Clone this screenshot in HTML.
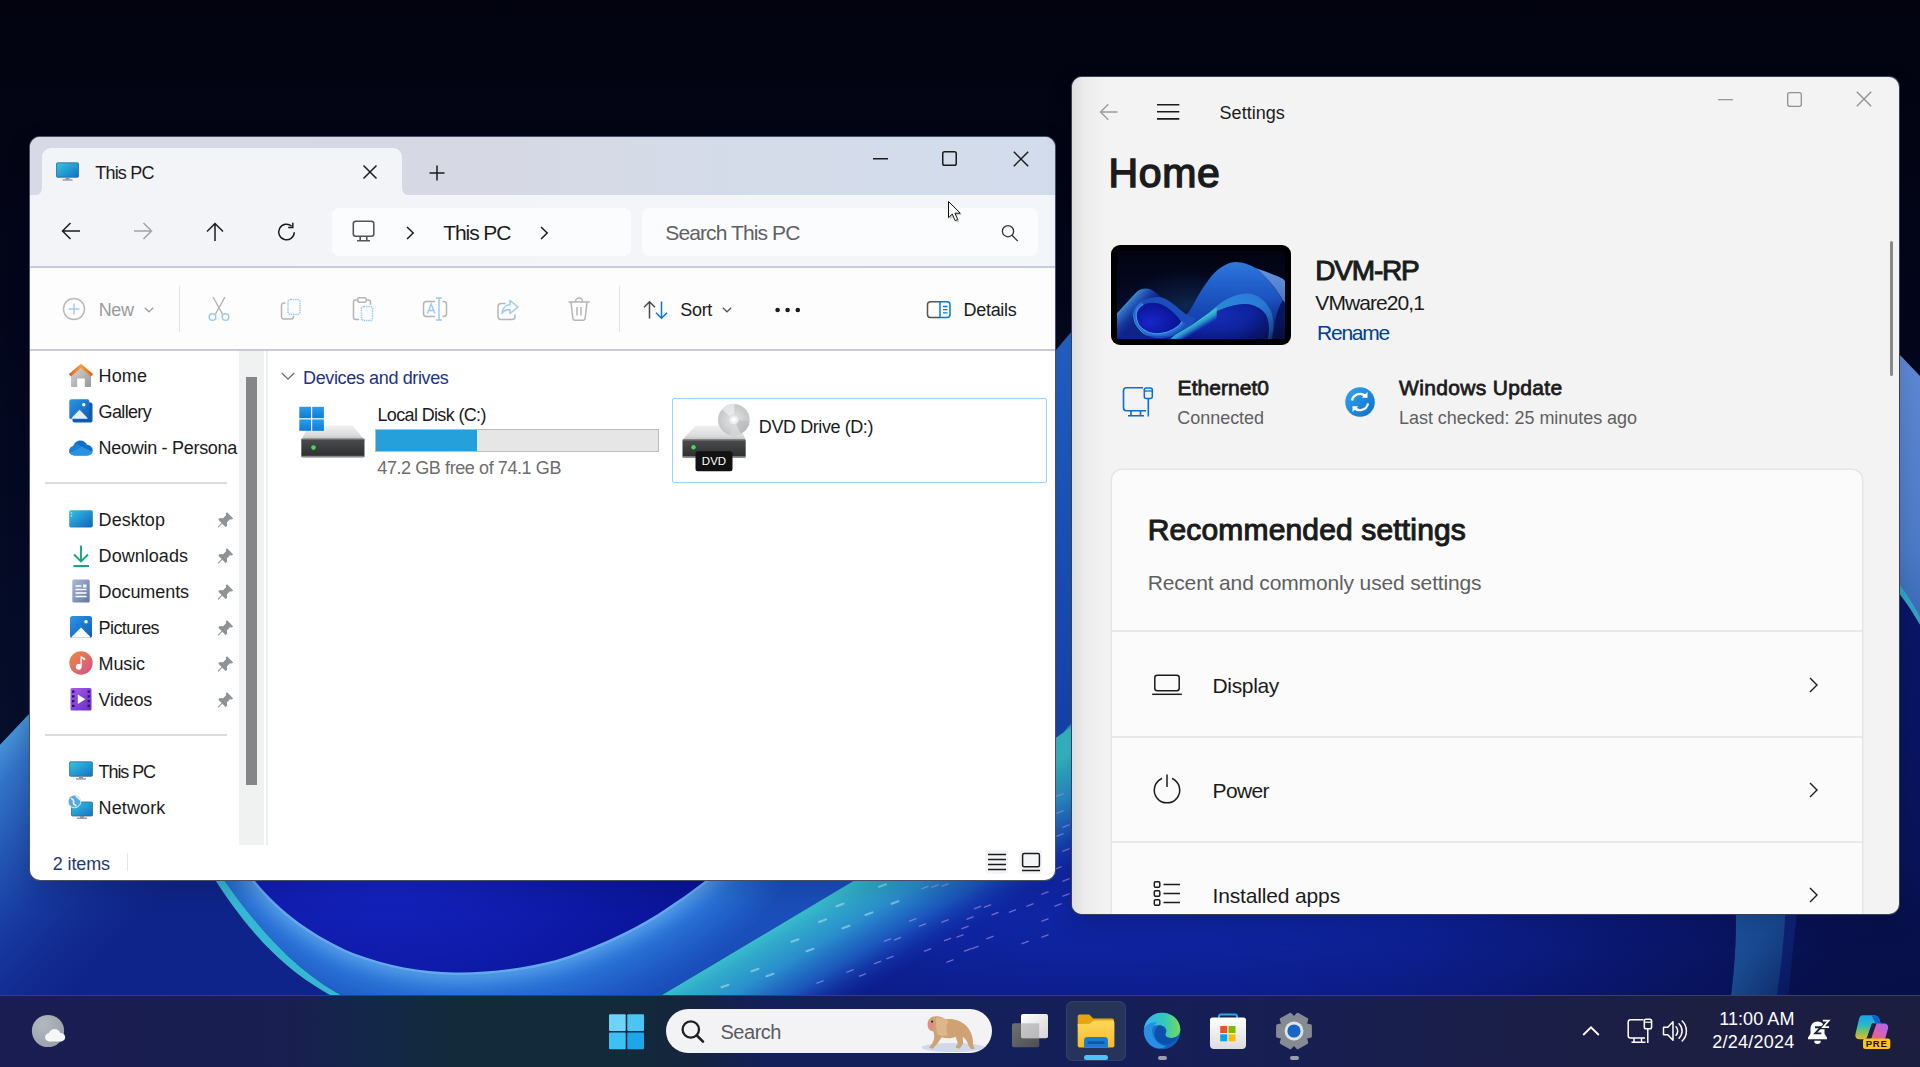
<!DOCTYPE html>
<html lang="en"><head><meta charset="utf-8"><title>Desktop</title>
<style>
html,body{margin:0;padding:0;}
body{width:1920px;height:1067px;overflow:hidden;background:#03051a;position:relative;font-family:"Liberation Sans",sans-serif;}
.t{position:absolute;white-space:nowrap;line-height:1;z-index:50;}
.a{position:absolute;}
svg{position:absolute;overflow:visible;}
</style></head><body>
<svg width="0" height="0" style="left:0;top:0"><defs>
<linearGradient id="wbg" x1="0" y1="0" x2="0" y2="1"><stop offset="0" stop-color="#02030f"/><stop offset=".4" stop-color="#040820"/><stop offset=".75" stop-color="#06102e"/><stop offset="1" stop-color="#081648"/></linearGradient>
<radialGradient id="whalo" cx=".42" cy=".62" r=".38"><stop offset="0" stop-color="#12305c" stop-opacity=".75"/><stop offset=".7" stop-color="#0a1c40" stop-opacity=".4"/><stop offset="1" stop-color="#0a1c40" stop-opacity="0"/></radialGradient>
<linearGradient id="wlp" gradientUnits="userSpaceOnUse" x1="15" y1="730" x2="176" y2="880"><stop offset="0" stop-color="#4690d6"/><stop offset=".12" stop-color="#3272c6"/><stop offset=".35" stop-color="#2356b4"/><stop offset=".6" stop-color="#1739a0"/><stop offset=".8" stop-color="#122c92"/><stop offset="1" stop-color="#0f248a"/></linearGradient>
<linearGradient id="wbp" x1="0" y1="0" x2="0" y2="1"><stop offset="0" stop-color="#2f78dc"/><stop offset=".25" stop-color="#2262cc"/><stop offset=".6" stop-color="#1848b6"/><stop offset="1" stop-color="#1030a4"/></linearGradient>
<linearGradient id="wperi" x1="0" y1="0" x2="0" y2="1"><stop offset="0" stop-color="#6a92dc"/><stop offset=".7" stop-color="#4f7ccc"/><stop offset="1" stop-color="#3a70c0"/></linearGradient>
<radialGradient id="wlbowl" cx=".32" cy=".62" r=".62"><stop offset="0" stop-color="#1826c8"/><stop offset=".55" stop-color="#0f1cac"/><stop offset="1" stop-color="#0a1498"/></radialGradient>
<linearGradient id="wring" x1="0" y1="0" x2="1" y2="1"><stop offset="0" stop-color="#2c74d8"/><stop offset=".5" stop-color="#2a78dc"/><stop offset="1" stop-color="#1d58c6"/></linearGradient>
<linearGradient id="wridge" x1="0" y1="1" x2="1" y2="0"><stop offset="0" stop-color="#2a7cd4"/><stop offset=".18" stop-color="#30b4d8"/><stop offset=".4" stop-color="#2a8ad0"/><stop offset=".7" stop-color="#2a80dc"/><stop offset="1" stop-color="#2a70c8"/></linearGradient>
<radialGradient id="wrbowl" cx=".45" cy=".3" r=".8"><stop offset="0" stop-color="#152db6"/><stop offset=".5" stop-color="#0e239e"/><stop offset="1" stop-color="#081260"/></radialGradient>
<linearGradient id="wshade" x1="0" y1="0" x2="1" y2="0"><stop offset="0" stop-color="#050c40" stop-opacity="0"/><stop offset="1" stop-color="#050c40" stop-opacity=".85"/></linearGradient>
<linearGradient id="wridge2" gradientUnits="userSpaceOnUse" x1="758" y1="938" x2="819" y2="1041"><stop offset="0" stop-color="#38bccc"/><stop offset=".1" stop-color="#30aaca"/><stop offset=".3" stop-color="#2a8ecc"/><stop offset=".55" stop-color="#1c5cc0" stop-opacity=".9"/><stop offset=".85" stop-color="#1030ac" stop-opacity="0"/><stop offset="1" stop-color="#0e2aa8" stop-opacity="0"/></linearGradient>
<radialGradient id="wshade2" gradientUnits="userSpaceOnUse" cx="1930" cy="1090" r="540"><stop offset="0" stop-color="#060c3c" stop-opacity=".92"/><stop offset=".3" stop-color="#070e44" stop-opacity=".8"/><stop offset=".42" stop-color="#08104a" stop-opacity=".5"/><stop offset=".7" stop-color="#08104a" stop-opacity=".2"/><stop offset="1" stop-color="#08104a" stop-opacity="0"/></radialGradient>
<symbol id="bloom" viewBox="0 0 1920 1067" preserveAspectRatio="none">
<rect width="1920" height="1067" fill="url(#wbg)"/>
<rect width="1920" height="1067" fill="url(#whalo)"/>
<!-- periwinkle petal -->
<path d="M1590 232 C1700 270 1820 310 1899 354 L1920 376 L1925 660 C1880 560 1800 420 1590 232Z" fill="url(#wperi)"/>
<!-- big petal -->
<path d="M700 1080 L758 806 C800 760 840 710 875 640 C920 550 985 440 1056 350 C1135 255 1230 170 1349 161 C1440 160 1540 200 1605 241 C1760 380 1860 520 1925 660 L1925 1080Z" fill="url(#wbp)"/>
<!-- dark right below periwinkle -->
<path d="M1899 590 L1925 632 L1925 1080 L1780 1080 C1800 900 1800 740 1899 590Z" fill="#0a1668"/>
<path d="M1893 586 C1905 600 1915 615 1925 634 L1925 626 C1916 608 1908 596 1899 584Z" fill="#35b0cc"/>
<!-- left petal -->
<path d="M-5 750 L30 713 C100 640 170 560 231 498 C270 462 330 452 380 470 C440 495 500 560 560 625 C640 715 700 770 770 815 L820 1080 L-5 1080Z" fill="url(#wlp)"/>
<!-- left ring + bowl -->
<path d="M185 700 C150 780 230 930 350 1000 C430 1040 560 1040 662 995 L855 880 L900 800 C840 790 790 760 740 720 C660 650 560 560 470 560 C340 560 220 620 185 700Z" fill="#1b4eba"/>
<clipPath id="ringclip"><path d="M200 700 C188 760 197 830 217 870 C258 930 299 975 350 1000 L420 1080 L662 1080 L662 995 L855 880 L900 800 C840 790 790 760 740 720 C660 650 560 560 470 560 C340 560 230 620 200 700Z"/></clipPath>
<filter id="wblur" x="-10%" y="-10%" width="120%" height="120%"><feGaussianBlur stdDeviation="7"/></filter>
<g clip-path="url(#ringclip)"><g fill="none" filter="url(#wblur)">
<path d="M300 650 C250 680 225 720 225 760 C225 805 238 850 255 881 C280 912 315 937 353 953 C388 966 420 972 455 972.500 C490 973 525 968 556 960 C592 949 627 933 658 914 C675 903 692 891 705 881 C718 870 728 852 735 840" stroke-width="116" stroke="#1f58c2"/>

<path d="M300 650 C250 680 225 720 225 760 C225 805 238 850 255 881 C280 912 315 937 353 953 C388 966 420 972 455 972.500 C490 973 525 968 556 960 C592 949 627 933 658 914 C675 903 692 891 705 881 C718 870 728 852 735 840" stroke-width="88" stroke="#2362ca"/>
<path d="M300 650 C250 680 225 720 225 760 C225 805 238 850 255 881 C280 912 315 937 353 953 C388 966 420 972 455 972.500 C490 973 525 968 556 960 C592 949 627 933 658 914 C675 903 692 891 705 881 C718 870 728 852 735 840" stroke-width="62" stroke="#286cd2"/>
<path d="M300 650 C250 680 225 720 225 760 C225 805 238 850 255 881 C280 912 315 937 353 953 C388 966 420 972 455 972.500 C490 973 525 968 556 960 C592 949 627 933 658 914 C675 903 692 891 705 881 C718 870 728 852 735 840" stroke-width="40" stroke="#2e78da"/>
<path d="M300 650 C250 680 225 720 225 760 C225 805 238 850 255 881 C280 912 315 937 353 953 C388 966 420 972 455 972.500 C490 973 525 968 556 960 C592 949 627 933 658 914 C675 903 692 891 705 881 C718 870 728 852 735 840" stroke-width="22" stroke="#3a88e2"/>
<path d="M300 650 C250 680 225 720 225 760 C225 805 238 850 255 881 C280 912 315 937 353 953 C388 966 420 972 455 972.500 C490 973 525 968 556 960 C592 949 627 933 658 914 C675 903 692 891 705 881 C718 870 728 852 735 840" stroke-width="9" stroke="#5ea6ea"/>
</g></g>
<path d="M209 870 C249 935 289 975 340 1000 L350 1000 C299 975 258 930 217 870 C197 830 188 760 200 700 C183 760 189 830 209 870Z" fill="#35b8d4"/>
<path d="M225 760 C225 805 238 850 255 881 C280 912 315 937 353 953 C388 966 420 972 455 972.500 C490 973 525 968 556 960 C592 949 627 933 658 914 C675 903 692 891 705 881 C718 870 728 852 735 840" fill="none" stroke="#6aaeee" stroke-width="5" opacity=".8"/>
<path d="M225 760 C225 805 238 850 255 881 C280 912 315 937 353 953 C388 966 420 972 455 972.500 C490 973 525 968 556 960 C592 949 627 933 658 914 C675 903 692 891 705 881 C718 870 728 852 735 840 C700 790 640 720 560 670 C480 620 380 610 300 650 C250 680 225 720 225 760Z" fill="url(#wlbowl)"/>
<!-- ridge of big petal -->
<path d="M1064 732 C1100 690 1200 600 1330 550 C1380 530 1430 522 1477 520 C1600 515 1700 600 1760 720 C1800 810 1790 960 1760 1080 L1715 1080 C1745 960 1745 840 1700 760 C1650 680 1540 630 1440 640 C1330 650 1200 690 1120 735 C1095 752 1078 762 1064 768Z" fill="url(#wridge)"/>
<!-- right bowl -->
<path d="M560 1080 L662 995 L855 880 L1064 732 L1064 768 C1078 762 1095 752 1120 735 C1200 690 1330 650 1440 640 C1540 630 1650 680 1700 760 C1745 840 1745 960 1715 1080Z" fill="url(#wrbowl)"/>
<path d="M560 1080 L662 995 L855 880 L1064 732 L1140 680 L1140 800 L1000 1080Z" fill="url(#wridge2)"/>
<path d="M1300 500 L1925 500 L1925 1080 L1300 1080Z" fill="url(#wshade2)"/>
<path d="M1300 640 L1925 640 L1925 1080 L1300 1080Z" fill="url(#wshade)" opacity=".0"/>
</symbol>
</defs></svg>
<svg id="wall" width="1920" height="1067" viewBox="0 0 1920 1067" style="left:0;top:0">
<use href="#bloom" x="0" y="0" width="1920" height="1067"/>
<g stroke="#c4ecf4" stroke-width="2" stroke-linecap="round" opacity=".5"><path d="M721.5 987.3l7 -2.6M751.5 971.3l7 -2.6M791.5 941.8l7 -2.6M819.0 922.0l7 -2.6M842.5 928.3l7 -2.6M865.5 915.0l7 -2.6M879.0 886.8l7 -2.6M806.5 951.3l7 -2.6M891.5 903.8l7 -2.6M766.5 976.3l7 -2.6M836.5 906.3l7 -2.6"/></g>
<g stroke="#bca0f0" stroke-width="1.400" stroke-linecap="round" opacity=".55"><path d="M922.0 888.7l6 -2.4M932.0 887.2l6 -2.4M942.0 886.2l6 -2.4M909.5 921.2l6 -2.4M919.5 926.2l6 -2.4M884.5 941.2l6 -2.4M894.5 939.9l6 -2.4M924.5 951.2l6 -2.4M944.5 940.7l6 -2.4M957.0 937.2l6 -2.4M942.0 922.2l6 -2.4M967.0 919.2l6 -2.4M974.5 908.7l6 -2.4M984.5 907.2l6 -2.4M992.0 914.9l6 -2.4M1009.5 912.2l6 -2.4M962.0 928.7l6 -2.4M964.5 951.2l6 -2.4M972.0 948.7l6 -2.4M947.0 962.2l6 -2.4M887.0 958.7l6 -2.4M874.5 963.7l6 -2.4M847.0 972.2l6 -2.4M859.5 976.2l6 -2.4M817.0 983.2l6 -2.4M987.0 938.7l6 -2.4M1022.0 943.7l6 -2.4M1042.0 937.2l6 -2.4M1057.0 836.2l6 -2.4M1063.0 827.2l6 -2.4M1057.0 813.2l6 -2.4M1063.0 851.2l6 -2.4M1055.0 869.2l6 -2.4M1063.0 881.2l6 -2.4M1057.0 796.2l6 -2.4M1063.0 896.2l6 -2.4M1027.0 906.2l6 -2.4M1042.0 894.2l6 -2.4M1055.0 906.2l6 -2.4M1042.0 921.2l6 -2.4"/></g>
</svg>
<!-- ===== File Explorer window ===== -->
<div class="a" id="exwin" style="left:29px;top:136px;width:1027px;height:745px;border-radius:11px;background:#4a4f66;z-index:10;box-shadow:0 8px 24px rgba(0,0,10,.16)"></div>
<div class="a" id="exin" style="left:30px;top:137px;width:1025px;height:743px;border-radius:10px;overflow:hidden;background:#fff;z-index:11">
<div class="a" style="left:-30px;top:-137px;width:1920px;height:1067px">
  <!-- title bar -->
  <div class="a" style="left:30px;top:137px;width:1026px;height:59px;background:linear-gradient(90deg,#d7dae5 0%,#d6d9e4 45%,#d4dcea 75%,#d2dcec 100%)"></div>
  <!-- nav bar -->
  <div class="a" style="left:30px;top:195px;width:1026px;height:72px;background:linear-gradient(90deg,#f3f4f7 0%,#f4f5f8 60%,#f2f5fa 100%)"></div>
  <!-- active tab -->
  <div class="a" style="left:42px;top:148px;width:360px;height:48px;border-radius:9px 9px 0 0;background:#f3f4f7"></div>
  <svg width="12" height="9" style="left:30px;top:187px"><path d="M0 9 L12 9 L12 0 C12 6 9 9 0 9Z" fill="#f3f4f7"/></svg>
  <svg width="12" height="9" style="left:402px;top:187px"><path d="M12 9 L0 9 L0 0 C0 6 3 9 12 9Z" fill="#f3f4f7"/></svg>
  <!-- lines -->
  <div class="a" style="left:30px;top:266px;width:1026px;height:2px;background:#c5cbd9"></div>
  <div class="a" style="left:30px;top:268px;width:1026px;height:81px;background:#fdfdfe"></div>
  <div class="a" style="left:30px;top:349px;width:1026px;height:2px;background:#c5cbd9"></div>
  <!-- address + search -->
  <div class="a" style="left:332px;top:208px;width:299px;height:48px;border-radius:7px;background:#fbfcfe"></div>
  <div class="a" style="left:642px;top:208px;width:396px;height:48px;border-radius:7px;background:#fbfcfe"></div>
  <!-- nav pane scroll column -->
  <div class="a" style="left:239px;top:351px;width:25px;height:494px;background:#f0f1f1"></div>
  <div class="a" style="left:246px;top:377px;width:11px;height:408px;background:#858688"></div>
  <div class="a" style="left:266px;top:351px;width:2px;height:494px;background:#eeeeee"></div>
  <!-- nav separators -->
  <div class="a" style="left:45px;top:482px;width:182px;height:2px;background:#dcdcdc"></div>
  <div class="a" style="left:45px;top:734px;width:182px;height:2px;background:#dcdcdc"></div>
  <!-- status bar sep -->
  <div class="a" style="left:127px;top:853px;width:1px;height:18px;background:#e6e6e6"></div>
  <!-- tab icon: monitor -->
<svg width="24" height="20" viewBox="0 0 24 20" style="left:56px;top:162px">
<defs><linearGradient id="mon1" x1="0" y1="0" x2="1" y2="1"><stop offset="0" stop-color="#35c6e0"/><stop offset="1" stop-color="#1272c4"/></linearGradient></defs>
<rect x=".5" y=".8" width="22" height="14.5" rx="1" fill="url(#mon1)" stroke="#2a6a98" stroke-width=".8"/>
<rect x="9.5" y="15.5" width="4" height="2" fill="#8a9098"/><rect x="6.5" y="17.3" width="10" height="1.3" fill="#8a9098"/></svg>
<!-- tab close -->
<svg width="16" height="16" viewBox="0 0 16 16" style="left:362px;top:164px"><path d="M1.5 1.5l13 13M14.5 1.5l-13 13" stroke="#1b1b1b" stroke-width="1.5" fill="none"/></svg>
<!-- new tab plus -->
<svg width="16" height="16" viewBox="0 0 16 16" style="left:429px;top:165px"><path d="M8 .5v15M.5 8h15" stroke="#1b1b1b" stroke-width="1.5" fill="none"/></svg>
<!-- caption buttons -->
<svg width="16" height="2" style="left:873px;top:157.5px"><rect width="15" height="1.5" fill="#1b1b1b"/></svg>
<svg width="17" height="17" viewBox="0 0 17 17" style="left:941px;top:150px"><rect x="1.75" y="1.75" width="13.5" height="13.5" rx="1.8" fill="none" stroke="#1b1b1b" stroke-width="1.5"/></svg>
<svg width="16" height="16" viewBox="0 0 16 16" style="left:1013px;top:151px"><path d="M.8 .8l14.4 14.4M15.2 .8L.8 15.2" stroke="#1b1b1b" stroke-width="1.5" fill="none"/></svg>
<!-- nav arrows -->
<svg width="20" height="18" viewBox="0 0 20 18" style="left:61px;top:222px"><path d="M19 9H1.5M9.5 1L1.5 9l8 8" stroke="#1b1b1b" stroke-width="1.5" fill="none" stroke-linejoin="miter"/></svg>
<svg width="20" height="18" viewBox="0 0 20 18" style="left:133px;top:222px"><path d="M1 9h17.5M10.500 1l8 8-8 8" stroke="#a2a3a6" stroke-width="1.5" fill="none"/></svg>
<svg width="18" height="20" viewBox="0 0 18 20" style="left:205.500px;top:221.500px"><path d="M9 19V1.500M1 9.500l8-8 8 8" stroke="#1b1b1b" stroke-width="1.5" fill="none"/></svg>
<!-- refresh -->
<svg width="20" height="20" viewBox="0 0 20 20" style="left:277px;top:222px"><path d="M17.300 10.300a7.800 7.800 0 1 1-2.600-6.100" stroke="#1b1b1b" stroke-width="1.500" fill="none"/><path d="M15.800 .800v4.600h-4.600" stroke="#1b1b1b" stroke-width="1.500" fill="none"/></svg>
<!-- address monitor icon -->
<svg width="24" height="23" viewBox="0 0 24 23" style="left:352px;top:219.500px"><rect x="1.300" y="1.300" width="20.500" height="15" rx="2.500" fill="none" stroke="#555" stroke-width="1.600"/><path d="M8.200 16.500v4M14.800 16.500v4M5 20.800h13" stroke="#555" stroke-width="1.600" fill="none"/></svg>
<svg width="9" height="14" viewBox="0 0 9 14" style="left:405.500px;top:225.500px"><path d="M1 1l6.200 6L1 13" stroke="#1b1b1b" stroke-width="1.500" fill="none"/></svg>
<svg width="9" height="14" viewBox="0 0 9 14" style="left:539.500px;top:225.500px"><path d="M1 1l6.200 6L1 13" stroke="#1b1b1b" stroke-width="1.500" fill="none"/></svg>
<!-- search icon -->
<svg width="18" height="18" viewBox="0 0 18 18" style="left:1001px;top:224px"><circle cx="7" cy="7.200" r="5.600" fill="none" stroke="#2e2e2e" stroke-width="1.300"/><path d="M11 11.300l5.800 5.800" stroke="#2e2e2e" stroke-width="1.300"/></svg>
<!-- cursor -->
<svg width="16" height="24" viewBox="0 0 16 24" style="left:947px;top:200px;z-index:60"><path d="M3 3.500v16.200l3.800-3.600 2.900 6.600 2.600-1.200-2.900-6.300h5.400z" fill="#000" opacity=".18"/><path d="M1.500 1.500v16.200l3.800-3.600 2.900 6.600 2.600-1.200-2.900-6.300h5.400z" fill="#fff" stroke="#111" stroke-width="1" stroke-linejoin="round"/></svg>
<!-- command bar -->
<svg width="24" height="24" viewBox="0 0 24 24" style="left:61.500px;top:297px"><circle cx="12" cy="12" r="10.500" fill="none" stroke="#b9b9b9" stroke-width="1.500"/><path d="M12 6.500v11M6.500 12h11" stroke="#a6cdf0" stroke-width="1.500"/></svg>
<svg width="10" height="6" viewBox="0 0 10 6" style="left:143.500px;top:306.500px"><path d="M.8 .8l4.200 4 4.200-4" stroke="#a0a0a0" stroke-width="1.200" fill="none"/></svg>
<div class="a" style="left:178.500px;top:286px;width:1.500px;height:46px;background:#e4e4e4"></div>
<div class="a" style="left:618.500px;top:286px;width:1.500px;height:46px;background:#e4e4e4"></div>
<!-- cut -->
<svg width="24" height="26" viewBox="0 0 24 26" style="left:207px;top:296px"><path d="M6 1l9.500 17M18 1L8.500 18" stroke="#b5b5b5" stroke-width="1.500" fill="none"/><circle cx="5.500" cy="21" r="3.300" fill="none" stroke="#9ccbf2" stroke-width="1.500"/><circle cx="18.500" cy="21" r="3.300" fill="none" stroke="#9ccbf2" stroke-width="1.500"/></svg>
<!-- copy -->
<svg width="24" height="24" viewBox="0 0 24 24" style="left:279px;top:297px"><path d="M6.500 6H4.800A2.300 2.300 0 0 0 2.500 8.300v11.400A2.300 2.300 0 0 0 4.800 22h7.400a2.300 2.300 0 0 0 2.300-2.300V19" stroke="#b5b5b5" stroke-width="1.500" fill="none"/><rect x="9" y="2.500" width="12" height="15" rx="2.500" fill="none" stroke="#9ccbf2" stroke-width="1.500" stroke-dasharray="1.500 .8"/></svg>
<!-- paste -->
<svg width="24" height="26" viewBox="0 0 24 26" style="left:351px;top:296px"><path d="M8 23.500H4.500a2 2 0 0 1-2-2V6a2 2 0 0 1 2-2h2.200M15.300 4h2.200a2 2 0 0 1 2 2v3" stroke="#b5b5b5" stroke-width="1.500" fill="none"/><rect x="6.800" y="1.800" width="8.500" height="4.500" rx="1.500" fill="none" stroke="#b5b5b5" stroke-width="1.500"/><rect x="10.500" y="10.500" width="11" height="14" rx="2.200" fill="none" stroke="#9ccbf2" stroke-width="1.500" stroke-dasharray="1.500 .8"/></svg>
<!-- rename -->
<svg width="26" height="26" viewBox="0 0 26 26" style="left:422px;top:296px"><path d="M13 5.500H4.500a3 3 0 0 0-3 3v9a3 3 0 0 0 3 3H13M20.500 5.500h1a3 3 0 0 1 3 3v9a3 3 0 0 1-3 3h-1" stroke="#b5b5b5" stroke-width="1.500" fill="none"/><path d="M17 2v22M14 2h6M14 24h6" stroke="#9ccbf2" stroke-width="1.500" fill="none"/><path d="M5.500 17.500l3.700-9.500 3.700 9.500M6.800 14.500h4.800" stroke="#9ccbf2" stroke-width="1.400" fill="none"/></svg>
<!-- share -->
<svg width="24" height="22" viewBox="0 0 24 22" style="left:495.500px;top:298.500px"><path d="M9.500 4.500H5a3 3 0 0 0-3 3v10a3 3 0 0 0 3 3h11a3 3 0 0 0 3-3v-2" stroke="#b5b5b5" stroke-width="1.500" fill="none"/><path d="M14 1.500l8 6.500-8 6.500v-4c-4 0-6.500 1.200-8 4 .3-4.500 3-8.500 8-9z" stroke="#9ccbf2" stroke-width="1.500" fill="none" stroke-linejoin="round"/></svg>
<!-- delete -->
<svg width="24" height="26" viewBox="0 0 24 26" style="left:567px;top:296px"><path d="M1.500 6h21M8.500 5.500a3.500 3.500 0 0 1 7 0M4 6l1.800 16a2.500 2.500 0 0 0 2.500 2.300h7.400a2.500 2.500 0 0 0 2.500-2.300L20 6M10 11v8.500M14 11v8.500" stroke="#b5b5b5" stroke-width="1.500" fill="none"/></svg>
<!-- sort -->
<svg width="26" height="20" viewBox="0 0 26 20" style="left:643px;top:299.500px"><path d="M6.500 18.500V1.800M1 7.300l5.500-5.500 5.500 5.500" stroke="#4a4a4a" stroke-width="1.500" fill="none"/><path d="M18.500 1.500v16.700M13 12.700l5.500 5.500 5.500-5.500" stroke="#0b78d4" stroke-width="1.500" fill="none"/></svg>
<svg width="10" height="6" viewBox="0 0 10 6" style="left:722px;top:306.500px"><path d="M.8 .8l4.200 4 4.200-4" stroke="#555" stroke-width="1.200" fill="none"/></svg>
<!-- dots -->
<svg width="26" height="6" viewBox="0 0 26 6" style="left:774.500px;top:307px"><circle cx="2.600" cy="3" r="2.300" fill="#1b1b1b"/><circle cx="12.600" cy="3" r="2.300" fill="#1b1b1b"/><circle cx="22.800" cy="3" r="2.300" fill="#1b1b1b"/></svg>
<!-- details icon -->
<svg width="26" height="20" viewBox="0 0 26 20" style="left:926px;top:299.500px"><path d="M14 1.800H4.500a3 3 0 0 0-3 3v9.800a3 3 0 0 0 3 3H14" stroke="#555" stroke-width="1.500" fill="none"/><path d="M14 1.800h7a3 3 0 0 1 3 3v9.800a3 3 0 0 1-3 3h-7z" stroke="#0b78d4" stroke-width="1.500" fill="none"/><path d="M17 6.500h4.500M17 9.700h4.500M17 12.900h4.500" stroke="#0b78d4" stroke-width="1.300"/></svg>
<!-- group chevron -->
<svg width="14" height="9" viewBox="0 0 14 9" style="left:280.500px;top:372px"><path d="M.8 1l6.200 6.200L13.200 1" stroke="#6a6a6a" stroke-width="1.300" fill="none"/></svg>
<!-- status bar view icons -->
<div class="a" style="left:985px;top:850px;width:23px;height:24px;border-radius:3px;background:#f4f5f7"></div>
<div class="a" style="left:1019px;top:850px;width:23px;height:24px;border-radius:3px;background:#f4f5f7"></div>
<svg width="20" height="18" viewBox="0 0 20 18" style="left:987px;top:853px"><path d="M1 1.500h18M1 6.500h18M1 11.500h18M1 16.500h18" stroke="#1b1b1b" stroke-width="1.300"/></svg>
<svg width="20" height="20" viewBox="0 0 20 20" style="left:1021px;top:852px"><rect x="1.600" y="1.600" width="16.800" height="13.200" rx="1.500" fill="none" stroke="#1b1b1b" stroke-width="1.500"/><path d="M1 18.500h18" stroke="#1b1b1b" stroke-width="1.300"/></svg>

<!-- nav pane icons (24x24 at x=69) -->
<svg width="0" height="0"><defs>
<linearGradient id="gHomeW" x1="0" y1="0" x2="1" y2="1"><stop offset="0" stop-color="#d8d8d8"/><stop offset="1" stop-color="#989898"/></linearGradient>
<linearGradient id="gHomeR" x1="0" y1="0" x2="1" y2="0"><stop offset="0" stop-color="#e8601c"/><stop offset=".5" stop-color="#f7a13c"/><stop offset="1" stop-color="#e8601c"/></linearGradient>
<linearGradient id="gPic" x1="0" y1="0" x2="1" y2="1"><stop offset="0" stop-color="#2a97e4"/><stop offset="1" stop-color="#0f5cb8"/></linearGradient>
<linearGradient id="gDesk" x1="0" y1="0" x2="1" y2="1"><stop offset="0" stop-color="#34c3e6"/><stop offset="1" stop-color="#0f62b8"/></linearGradient>
<linearGradient id="gDoc" x1="0" y1="0" x2="1" y2="1"><stop offset="0" stop-color="#a9b8d6"/><stop offset="1" stop-color="#5f76a6"/></linearGradient>
<linearGradient id="gMus" x1="0" y1="0" x2="1" y2="1"><stop offset="0" stop-color="#f08a3c"/><stop offset="1" stop-color="#d0508e"/></linearGradient>
<linearGradient id="gVid" x1="0" y1="0" x2="1" y2="1"><stop offset="0" stop-color="#a45cf0"/><stop offset="1" stop-color="#6a2cc0"/></linearGradient>
<linearGradient id="gMon" x1="0" y1="0" x2="1" y2="1"><stop offset="0" stop-color="#35c6e0"/><stop offset="1" stop-color="#1272c4"/></linearGradient>
<linearGradient id="gDrvT" x1="0" y1="0" x2="0" y2="1"><stop offset="0" stop-color="#f0f0f0"/><stop offset=".7" stop-color="#dcdcdc"/><stop offset="1" stop-color="#c2c2c2"/></linearGradient>
<linearGradient id="gDrvF" x1="0" y1="0" x2="0" y2="1"><stop offset="0" stop-color="#4a4c4e"/><stop offset="1" stop-color="#2c2d2f"/></linearGradient>
<radialGradient id="gDisc" cx=".5" cy=".5" r=".5"><stop offset="0" stop-color="#ffffff"/><stop offset=".3" stop-color="#dcdcdc"/><stop offset="1" stop-color="#c4c6c8"/></radialGradient>
<g id="pin"><path d="M9.200 1.200l5.600 5.600-1.300 1.000-1.600-.3-2.800 2.800.2 3.100-1.500 1.200-3.000-3.000-3.600 3.600-.6-.6 3.600-3.600-3.000-3.000 1.200-1.500 3.100.2 2.800-2.800-.3-1.600z" fill="#8e9399"/></g>
</defs></svg>
<!-- Home -->
<svg width="24" height="24" viewBox="0 0 24 24" style="left:69px;top:364px"><path d="M2 9.500L12 2.200l10 7.300V22a1 1 0 0 1-1 1H15.800V14.500H8.200V23H3a1 1 0 0 1-1-1z" fill="url(#gHomeW)"/><path d="M.9 11.200L12 1.800l11.100 9.400" stroke="url(#gHomeR)" stroke-width="3.200" fill="none" stroke-linejoin="miter"/></svg>
<!-- Gallery -->
<svg width="24" height="24" viewBox="0 0 24 24" style="left:69px;top:399px"><rect x="3.500" y="3.500" width="20" height="20" rx="2" fill="#1259b0"/><rect x=".3" y=".3" width="20" height="20" rx="2" fill="url(#gPic)"/><path d="M2.200 19.300L10.500 10.800l8.300 8.500a1.500 1.500 0 0 1-.8.500H3a1.500 1.500 0 0 1-.8-.5z" fill="#e4eef9"/><circle cx="14.800" cy="5.800" r="1.700" fill="#fff"/></svg>
<!-- OneDrive -->
<svg width="24" height="16" viewBox="0 0 24 16" style="left:69px;top:439.500px"><path d="M5.500 15.500C2.500 15.500.3 13.500.3 10.800c0-2.400 1.700-4.200 4-4.600C5.300 2.800 8 .5 11.500.5c3 0 5.400 1.700 6.400 4.300 3.300.2 5.800 2.400 5.800 5.500 0 3-2.300 5.200-5.400 5.200z" fill="#0f6fc6"/><path d="M.8 12.800c.8 1.700 2.500 2.700 4.700 2.700h12.800c2.600 0 4.600-1.500 5.200-3.700L12.500 6.500z" fill="#2a92e4"/><path d="M4.300 6.200c-2.300.4-4 2.200-4 4.600 0 .8.200 1.500.5 2.100L12.600 6.400 8.600 4.000c-1.800-.3-3.500.5-4.300 2.200z" fill="#1a7fd6"/></svg>
<!-- Desktop -->
<svg width="24" height="18" viewBox="0 0 24 18" style="left:69px;top:510px"><rect x=".2" y=".2" width="23.600" height="17.400" rx="1.800" fill="url(#gDesk)"/><circle cx="2.500" cy="3" r=".8" fill="#bfeaf6"/><circle cx="2.500" cy="6" r=".8" fill="#bfeaf6"/></svg>
<!-- Downloads -->
<svg width="24" height="24" viewBox="0 0 24 24" style="left:69px;top:544px"><path d="M12 1.500v15M5 10.500l7 7 7-7M4.500 22h15.500" stroke="#17a77c" stroke-width="1.900" fill="none"/></svg>
<!-- Documents -->
<svg width="24" height="24" viewBox="0 0 24 24" style="left:69px;top:579px"><rect x="3.300" y=".5" width="17.400" height="23" rx="1.500" fill="url(#gDoc)"/><path d="M6.500 7h6M6.500 10.500h11M6.500 14h11M6.500 17.500h11" stroke="#fff" stroke-width="1.500"/><rect x="14" y="5.500" width="3.500" height="3" fill="#fff"/></svg>
<!-- Pictures -->
<svg width="24" height="24" viewBox="0 0 24 24" style="left:69px;top:615px"><rect x="1" y="1" width="22" height="22" rx="2.500" fill="url(#gPic)"/><path d="M2.500 22L12 12.500 21.500 22a2.500 2.500 0 0 1-1 .8H3.500a2.500 2.500 0 0 1-1-.8z" fill="#fff"/><circle cx="17" cy="6.800" r="1.800" fill="#fff"/></svg>
<!-- Music -->
<svg width="24" height="24" viewBox="0 0 24 24" style="left:69px;top:651px"><circle cx="12" cy="12" r="11.700" fill="url(#gMus)"/><path d="M11.500 5.200c2.200.2 4 1.300 5 3l-1.500 1.200c-.7-1-1.500-1.600-2.300-1.800v8.200a3 3 0 1 1-1.200-2.400z" fill="#fff"/></svg>
<!-- Videos -->
<svg width="24" height="24" viewBox="0 0 24 24" style="left:69px;top:687px"><rect x="1.500" y="1" width="21" height="22.500" rx="1.500" fill="url(#gVid)"/><path d="M3 3.500h2.500v2.300H3zM3 8.200h2.500v2.300H3zM3 13h2.500v2.300H3zM3 17.700h2.500V20H3zM18.500 3.500H21v2.300h-2.500zM18.500 8.200H21v2.300h-2.500zM18.500 13H21v2.300h-2.500zM18.500 17.700H21V20h-2.500z" fill="#2a1260"/><path d="M8.800 7.500l7.500 4.800-7.500 4.800z" fill="#fff"/></svg>
<!-- This PC -->
<svg width="24" height="20" viewBox="0 0 24 20" style="left:69px;top:761px"><rect x=".6" y=".8" width="22.800" height="14.500" rx="1" fill="url(#gMon)" stroke="#2a6a98" stroke-width=".8"/><rect x="10" y="15.500" width="4" height="2" fill="#8a9098"/><rect x="7" y="17.300" width="10" height="1.300" fill="#8a9098"/></svg>
<!-- Network -->
<svg width="26" height="26" viewBox="0 0 26 26" style="left:67px;top:794px"><rect x="4.500" y="8" width="21" height="14" rx="1" fill="url(#gMon)" stroke="#2a6a98" stroke-width=".8"/><rect x="13" y="22" width="4" height="1.800" fill="#8a9098"/><rect x="10" y="23.600" width="10" height="1.300" fill="#8a9098"/><circle cx="7.500" cy="7.500" r="6.300" fill="#5aa8e0" stroke="#dfeaf4" stroke-width="1"/><path d="M4 4.500c2 .5 3 2 2.500 4S8 11 9.500 12M9 2c1 1.500 3 2 4 4" stroke="#e8f4d8" stroke-width="1.600" fill="none"/></svg>
<!-- pins -->
<svg width="17.500" height="17.500" viewBox="0 0 16 16" style="left:216.500px;top:511px"><use href="#pin"/></svg>
<svg width="17.500" height="17.500" viewBox="0 0 16 16" style="left:216.500px;top:547px"><use href="#pin"/></svg>
<svg width="17.500" height="17.500" viewBox="0 0 16 16" style="left:216.500px;top:583px"><use href="#pin"/></svg>
<svg width="17.500" height="17.500" viewBox="0 0 16 16" style="left:216.500px;top:619px"><use href="#pin"/></svg>
<svg width="17.500" height="17.500" viewBox="0 0 16 16" style="left:216.500px;top:655px"><use href="#pin"/></svg>
<svg width="17.500" height="17.500" viewBox="0 0 16 16" style="left:216.500px;top:691px"><use href="#pin"/></svg>
<!-- Local disk icon -->
<svg width="72" height="56" viewBox="0 0 72 56" style="left:296px;top:404px">
<defs><linearGradient id="gLogo" x1="0" y1="0" x2="0" y2="1"><stop offset="0" stop-color="#2b9ce8"/><stop offset="1" stop-color="#0f7cd6"/></linearGradient></defs>
<path d="M12.500 21.500h44l11.200 13.600H5.800z" fill="url(#gDrvT)"/>
<rect x="5.300" y="34.800" width="63.200" height="18.400" rx="1.500" fill="url(#gDrvF)"/>
<rect x="5.300" y="34.800" width="63.200" height="1.200" fill="#6a6c6e"/>
<rect x="5.300" y="51.800" width="63.200" height="1.400" fill="#8a8a8a"/>
<circle cx="17.500" cy="43.600" r="2.300" fill="#3fdc5a"/>
<rect x="3.300" y="2.800" width="11.700" height="11.400" fill="url(#gLogo)"/><rect x="16.200" y="2.800" width="11.700" height="11.400" fill="url(#gLogo)"/><rect x="3.300" y="15.400" width="11.700" height="11.400" fill="url(#gLogo)"/><rect x="16.200" y="15.400" width="11.700" height="11.400" fill="url(#gLogo)"/>
</svg>
<!-- progress bar -->
<div class="a" style="left:375px;top:429px;width:284px;height:23px;background:#e6e6e6;box-shadow:inset 0 0 0 1px #bcbcbc"></div>
<div class="a" style="left:376px;top:430px;width:101px;height:21px;background:#26a0da"></div>
<!-- DVD tile -->
<div class="a" style="left:672px;top:398px;width:373px;height:83px;border:1.500px solid #99d1ff;border-radius:2px;background:#fff"></div>
<svg width="72" height="72" viewBox="0 0 72 72" style="left:678px;top:402px">
<path d="M17.500 23.800h44.500l5.500 13.900H4.500z" fill="url(#gDrvT)"/>
<circle cx="55.800" cy="17.800" r="15.600" fill="url(#gDisc)" stroke="#c6c8ca" stroke-width=".6"/>
<path d="M55.800 17.800L71.300 19.500A15.600 15.600 0 0 1 63 31.600z" fill="#b0b2b4" opacity=".55"/>
<path d="M55.800 17.800L63 31.600A15.600 15.600 0 0 1 52 32.900z" fill="#d8dadc" opacity=".6"/>
<path d="M55.800 17.800L44 7.600A15.600 15.600 0 0 1 56.500 2.200z" fill="#f4f6f6" opacity=".6"/>
<circle cx="55.800" cy="17.800" r="5" fill="#ececec" stroke="#d4d4d4" stroke-width=".7"/><circle cx="55.800" cy="17.800" r="2.300" fill="#fff"/>
<rect x="4.500" y="37.600" width="63.200" height="18" rx="1.500" fill="url(#gDrvF)"/>
<rect x="4.500" y="37.600" width="63.200" height="1.200" fill="#6a6c6e"/>
<rect x="4.500" y="54.200" width="63.200" height="1.400" fill="#8a8a8a"/>
<circle cx="15.500" cy="45.200" r="2.200" fill="#3fdc5a"/>
<rect x="17.500" y="49.200" width="37" height="20" rx="2.500" fill="#121212"/>
<text x="36" y="63.300" font-family="Liberation Sans, sans-serif" font-size="11.500" fill="#fff" text-anchor="middle">DVD</text>
</svg>

</div></div>
<!-- ===== Settings window ===== -->
<div class="a" id="setwin" style="left:1071px;top:76px;width:829px;height:839px;border-radius:11px;background:#3a3f58;z-index:20;box-shadow:0 8px 24px rgba(0,0,10,.16)"></div>
<div class="a" id="setin" style="left:1072px;top:77px;width:827px;height:837px;border-radius:10px;overflow:hidden;background:#f3f3f3;z-index:21">
<div class="a" style="left:-1072px;top:-77px;width:1920px;height:1067px">
  <div class="a" style="left:1072px;top:77px;width:34px;height:837px;background:linear-gradient(90deg,#dedede 0%,#ebebeb 35%,#f3f3f3 100%)"></div>
  <!-- card -->
  <div class="a" style="left:1112px;top:470px;width:750px;height:500px;border-radius:10px;background:#fbfbfb;box-shadow:0 0 0 1.500px #e6e6e6"></div>
  <div class="a" style="left:1112px;top:630px;width:750px;height:2px;background:#e9e9e9"></div>
  <div class="a" style="left:1112px;top:735.500px;width:750px;height:2px;background:#e9e9e9"></div>
  <div class="a" style="left:1112px;top:840.500px;width:750px;height:2px;background:#e9e9e9"></div>
  <!-- scrollbar -->
  <div class="a" style="left:1890px;top:241px;width:3px;height:135px;border-radius:2px;background:#8a8a8a"></div>
  <!-- thumbnail -->
  <div class="a" style="left:1111px;top:245px;width:180px;height:100px;border-radius:9px;background:#000"></div>
  <svg width="168" height="88" viewBox="0 0 168 88" style="left:1117px;top:251px"><clipPath id="thc"><rect width="168" height="88" rx="2.500"/></clipPath><g clip-path="url(#thc)"><use href="#bloom" x="0" y="-3" width="168" height="93.400"/></g></svg>
  <!-- back arrow, hamburger -->
<svg width="20" height="18" viewBox="0 0 20 18" style="left:1099px;top:102.500px"><path d="M18.500 9H1.500M9.300 1.200L1.500 9l7.800 7.800" stroke="#9c9c9c" stroke-width="1.400" fill="none"/></svg>
<svg width="24" height="18" viewBox="0 0 24 18" style="left:1157px;top:103px"><path d="M0 1.700h22.300M0 8.700h22.300M0 15.900h22.300" stroke="#1b1b1b" stroke-width="1.600"/></svg>
<!-- caption -->
<svg width="16" height="2" style="left:1718px;top:98.500px"><rect width="15" height="1.300" fill="#9a9a9a"/></svg>
<svg width="17" height="17" viewBox="0 0 17 17" style="left:1786px;top:91px"><rect x="1.700" y="1.700" width="13.600" height="13.600" rx="2" fill="none" stroke="#8f8f8f" stroke-width="1.300"/></svg>
<svg width="16" height="16" viewBox="0 0 16 16" style="left:1855.700px;top:91px"><path d="M.8 .8l14.400 14.400M15.200 .8L.8 15.200" stroke="#8f8f8f" stroke-width="1.300" fill="none"/></svg>
<!-- ethernet -->
<svg width="32" height="32" viewBox="0 0 32 32" style="left:1122px;top:386px"><path d="M21 1.800H4.500a3 3 0 0 0-3 3v17a3 3 0 0 0 3 3H24" stroke="#0a6fd0" stroke-width="1.600" fill="none"/><path d="M9 25v4.500M18.500 25v4.500M6 29.800h16" stroke="#0a6fd0" stroke-width="1.600" fill="none"/><rect x="22.300" y="2" width="8" height="10.500" rx="2" fill="none" stroke="#0a6fd0" stroke-width="1.500"/><path d="M22.500 5h7.500" stroke="#0a6fd0" stroke-width="1.300"/><path d="M26.300 12.500V30.500" stroke="#0a6fd0" stroke-width="1.600"/></svg>
<!-- windows update -->
<svg width="30" height="30" viewBox="0 0 30 30" style="left:1345px;top:387px"><defs><linearGradient id="gWU" x1="0" y1="0" x2="1" y2="1"><stop offset="0" stop-color="#35a4ec"/><stop offset="1" stop-color="#0c6fce"/></linearGradient></defs><circle cx="15" cy="15" r="14.800" fill="url(#gWU)"/><path d="M7 13.500a8.200 8.200 0 0 1 14.500-3.500" stroke="#fff" stroke-width="2.200" fill="none"/><path d="M22.500 5v5.800h-5.800z" fill="#fff"/><path d="M23 16.500a8.200 8.200 0 0 1-14.500 3.500" stroke="#fff" stroke-width="2.200" fill="none"/><path d="M7.500 25v-5.800h5.800z" fill="#fff"/></svg>
<!-- display -->
<svg width="32" height="24" viewBox="0 0 32 24" style="left:1151px;top:673px"><rect x="3.800" y="2.300" width="24.400" height="15.400" rx="2.500" fill="none" stroke="#1b1b1b" stroke-width="1.500"/><path d="M1.200 21.300h29.600" stroke="#1b1b1b" stroke-width="1.500"/></svg>
<!-- power -->
<svg width="30" height="32" viewBox="0 0 30 32" style="left:1152px;top:773px"><path d="M10 5.500a12.700 12.700 0 1 0 10 0" stroke="#1b1b1b" stroke-width="1.500" fill="none"/><path d="M15 1.500v12.500" stroke="#1b1b1b" stroke-width="1.500"/></svg>
<!-- installed apps -->
<svg width="28" height="28" viewBox="0 0 28 28" style="left:1153px;top:880px"><rect x="1.300" y="1.800" width="5.500" height="5.500" rx="1.200" fill="none" stroke="#1b1b1b" stroke-width="1.500"/><rect x="1.300" y="10.800" width="5.500" height="5.500" rx="1.200" fill="none" stroke="#1b1b1b" stroke-width="1.500"/><rect x="1.300" y="19.800" width="5.500" height="5.500" rx="1.200" fill="none" stroke="#1b1b1b" stroke-width="1.500"/><path d="M10.500 4.500H27M10.500 13.500H27M10.500 22.500H27" stroke="#1b1b1b" stroke-width="1.500"/></svg>
<!-- chevrons -->
<svg width="9" height="16" viewBox="0 0 9 16" style="left:1808.500px;top:677px"><path d="M1 1l7 7-7 7" stroke="#1b1b1b" stroke-width="1.400" fill="none"/></svg>
<svg width="9" height="16" viewBox="0 0 9 16" style="left:1808.500px;top:782px"><path d="M1 1l7 7-7 7" stroke="#1b1b1b" stroke-width="1.400" fill="none"/></svg>
<svg width="9" height="16" viewBox="0 0 9 16" style="left:1808.500px;top:887px"><path d="M1 1l7 7-7 7" stroke="#1b1b1b" stroke-width="1.400" fill="none"/></svg>

</div></div>
<div class="a" id="taskbar" style="left:0;top:995px;width:1920px;height:72px;background:linear-gradient(90deg,#1a1d52 0%,#191f50 15%,#13274a 19%,#132a3a 24%,#132a3a 33%,#14243e 36%,#14205a 40%,#14205a 52%,#161f56 62%,#1a1f4a 76%,#1c1e42 88%,#1c1e40 100%);z-index:30"></div>
<div class="a" style="left:0;top:995px;width:1920px;height:1px;background:#3b4060;z-index:31"></div>
<div class="a" style="left:0;top:995px;width:1920px;height:72px;z-index:32">
<div class="a" style="left:0;top:-995px;width:1920px;height:1067px">
<!-- weather -->
<svg width="40" height="36" viewBox="0 0 40 36" style="left:30px;top:1013px"><defs><radialGradient id="gMoon" cx=".35" cy=".3" r=".8"><stop offset="0" stop-color="#b4b8c0"/><stop offset="1" stop-color="#9a9ea6"/></radialGradient></defs><circle cx="18" cy="18" r="16.100" fill="url(#gMoon)"/><path transform="translate(-1.200,-3) scale(1.070)" d="M20 29.500c-2.800 0-4.800-1.800-4.800-4 0-2 1.500-3.600 3.600-3.900.7-2.300 2.800-3.900 5.300-3.900 2.600 0 4.700 1.600 5.400 3.900 2.600 0 4.500 1.700 4.500 3.900 0 2.300-2 4-4.600 4z" fill="#f4f6fa"/></svg>
<!-- start -->
<svg width="36" height="36" viewBox="0 0 36 36" style="left:609px;top:1014px"><defs><linearGradient id="gW1" x1="0" y1="0" x2="1" y2="1"><stop offset="0" stop-color="#74d6fc"/><stop offset="1" stop-color="#1a9fe6"/></linearGradient></defs><rect x="0" y=".3" width="16.700" height="16.700" rx="1" fill="#6ed3fb"/><rect x="18.300" y=".3" width="16.700" height="16.700" rx="1" fill="#48c6f6"/><rect x="0" y="18.600" width="16.700" height="16.700" rx="1" fill="#3fc0f2"/><rect x="18.300" y="18.600" width="16.700" height="16.700" rx="1" fill="#1ea6ea"/></svg>
<!-- search pill -->
<div class="a" style="left:666px;top:1009px;width:326px;height:44px;border-radius:22px;background:#f3f3f6;overflow:hidden">
 <svg width="70" height="44" viewBox="0 0 70 44" style="left:254px;top:0">
  <ellipse cx="33" cy="38.500" rx="31.500" ry="4.500" fill="#cfd8ec"/>
  <g transform="translate(-3.500,-6) scale(1.200)"><path d="M12 12c-2.500 1.500-3.300 5-2.500 8 .5 2.200 2.200 3.500 4.500 3.800 1.200 3.500 1 7-1 10l-2.500 3.500 3 .8 4.500-5 3-4.500c4 1.200 8 1 11.500-.5l2 5.500-2 3.500 3.500 1 3-4.500-.5-5.500c2 1.500 4 4 5 7.500l2 3 3-.5-1.500-4c.5-5-1.500-11-5.500-15-4.500-4.500-11-6.500-17.500-5.500-3-2.500-8-3.500-12-1.600z" fill="#cfa273"/>
  <path d="M16 12.500c4-1 8 0 10.500 2.500-2 4-2 8-.5 12-3 .5-6 .3-8.500-.8-1-4-1.200-9-1.500-13.700z" fill="#dcb78c"/>
  <path d="M10.200 16c1.200-.8 3-.8 4 .3.600 2 .3 4.200-1 5.800-1.800.2-3-.8-3.400-2.500-.3-1.200-.2-2.500.4-3.600z" fill="#e58a86"/>
  <circle cx="13" cy="15.500" r=".9" fill="#3a2418"/></g>
 </svg>
</div>
<svg width="30" height="30" viewBox="0 0 30 30" style="left:678px;top:1017px"><circle cx="12.800" cy="12.500" r="8.200" fill="none" stroke="#1f1f1f" stroke-width="2.300"/><path d="M18.600 18.300l6.400 6.300" stroke="#1f1f1f" stroke-width="2.600" stroke-linecap="round"/></svg>
<!-- task view -->
<svg width="40" height="36" viewBox="0 0 40 36" style="left:1010px;top:1012px"><defs><linearGradient id="gTV1" x1="0" y1="0" x2="1" y2="1"><stop offset="0" stop-color="#ffffff"/><stop offset="1" stop-color="#d4d4d6"/></linearGradient><linearGradient id="gTV2" x1="0" y1="0" x2="1" y2="1"><stop offset="0" stop-color="#707072"/><stop offset="1" stop-color="#4e4e50"/></linearGradient></defs><rect x="2" y="11.300" width="27.200" height="24" rx="2" fill="url(#gTV2)"/><rect x="11" y="2" width="27" height="24.300" rx="2" fill="url(#gTV1)"/><rect x="11" y="11.300" width="18.200" height="15" fill="#8e8e90" opacity=".45"/></svg>
<!-- explorer active bg -->
<div class="a" style="left:1066px;top:1001px;width:60px;height:60px;border-radius:7px;background:#27345a;box-shadow:inset 0 0 0 1px #323f66"></div>
<svg width="40" height="36" viewBox="0 0 40 36" style="left:1076px;top:1013px"><defs><linearGradient id="gFo" x1="0" y1="0" x2="0" y2="1"><stop offset="0" stop-color="#ffd75e"/><stop offset="1" stop-color="#f7bb24"/></linearGradient></defs><path d="M1.700 3.500a2 2 0 0 1 2-2h9.500l4 4H36a2 2 0 0 1 2 2v6H1.700z" fill="#e5a50c"/><path d="M1.700 11l12-.2 4.300-3.300h18.400a2 2 0 0 1 2 2v23a2 2 0 0 1-2 2H3.700a2 2 0 0 1-2-2z" fill="url(#gFo)"/><path d="M8 34.500v-7a3.500 3.500 0 0 1 3.500-3.500h17a3.500 3.500 0 0 1 3.500 3.500v7z" fill="#1b7ad4"/><rect x="11.500" y="28.300" width="17" height="2.600" rx="1" fill="#0f56a8"/></svg>
<div class="a" style="left:1084px;top:1055px;width:24px;height:5px;border-radius:3px;background:#4cc2ff"></div>
<!-- edge -->
<svg width="38" height="38" viewBox="0 0 38 38" style="left:1143px;top:1012px"><defs><linearGradient id="gE1" x1="0" y1="0" x2="1" y2="0"><stop offset="0" stop-color="#2fb8ee"/><stop offset=".55" stop-color="#34c6c0"/><stop offset="1" stop-color="#72dc5a"/></linearGradient><linearGradient id="gE2" x1="0" y1="0" x2="1" y2="1"><stop offset="0" stop-color="#1b86dc"/><stop offset="1" stop-color="#0c56b4"/></linearGradient></defs>
<circle cx="19" cy="19" r="18.300" fill="url(#gE2)"/>
<path d="M1 16C3 6.500 10.500.7 19 .7c10 0 17.800 7 18.300 16 .3 5.500-3.500 9.300-8.500 9.300-4 0-6.500-1.500-6.500-3.500 0-1.200 1-1.800 1-3.500 0-3-3-5.800-7.500-5.800C9 13.200 3.500 15 1 16z" fill="url(#gE1)"/>
<path d="M.8 19C2 13 8 9.500 14.500 10.500c-4 2-6 6-5 11 1.200 6.500 6.500 11.500 14 13-9 4.500-21 .3-22.700-15.500z" fill="#2790e4"/>
<path d="M15.800 13.200c4.500 0 7.500 2.800 7.500 5.800 0 1.700-1 2.300-1 3.500 0 2 2.500 3.500 6.500 3.500 2 0 3.800-.6 5.200-1.700-2.500 6.500-10 10.500-17 6.500-6.500-3.800-7.500-13-1.200-17.600z" fill="#0d4ea8" opacity=".9"/>
</svg>
<div class="a" style="left:1158px;top:1055.500px;width:9px;height:4.500px;border-radius:2.500px;background:#9a9daa"></div>
<!-- store -->
<svg width="38" height="38" viewBox="0 0 38 38" style="left:1209px;top:1012px"><defs><linearGradient id="gSt" x1="0" y1="0" x2="0" y2="1"><stop offset="0" stop-color="#ffffff"/><stop offset="1" stop-color="#dcdcde"/></linearGradient></defs><path d="M10 9V4.500a2 2 0 0 1 2-2h14a2 2 0 0 1 2 2V9" stroke="#2aa8ec" stroke-width="2" fill="none"/><path d="M1 8a2.500 2.500 0 0 1 2.500-2.500h31A2.500 2.500 0 0 1 37 8v25a4 4 0 0 1-4 4H5a4 4 0 0 1-4-4z" fill="url(#gSt)"/><rect x="11.200" y="14" width="7" height="7" fill="#f25022"/><rect x="19.500" y="14" width="7" height="7" fill="#7fba00"/><rect x="11.200" y="22.300" width="7" height="7" fill="#00a4ef"/><rect x="19.500" y="22.300" width="7" height="7" fill="#ffb900"/></svg>
<!-- settings gear -->
<svg width="38" height="38" viewBox="-19 -19 38 38" style="left:1275px;top:1012px"><g fill="#868a92" transform="rotate(30)"><circle r="13.600"/><g id="tooth"><path d="M-5.200 -17.900h10.400q1.200 0 1.500 1.200l1.300 5.700h-16l1.300-5.700q.3-1.200 1.500-1.200z"/></g><use href="#tooth" transform="rotate(60)"/><use href="#tooth" transform="rotate(120)"/><use href="#tooth" transform="rotate(180)"/><use href="#tooth" transform="rotate(240)"/><use href="#tooth" transform="rotate(300)"/></g><circle r="9.400" fill="#dfe3ea"/><circle r="6.600" fill="#1666c8"/></svg>
<div class="a" style="left:1290px;top:1055.500px;width:9px;height:4.500px;border-radius:2.500px;background:#9a9daa"></div>
<!-- tray chevron -->
<svg width="18" height="10" viewBox="0 0 18 10" style="left:1582px;top:1026px"><path d="M1.200 9L9 1.300 16.800 9" stroke="#fff" stroke-width="1.800" fill="none"/></svg>
<!-- network -->
<svg width="26" height="26" viewBox="0 0 26 26" style="left:1626.500px;top:1018px"><path d="M16.500 1.700H3.500a2.300 2.300 0 0 0-2.300 2.300v13.800a2.300 2.300 0 0 0 2.300 2.300H18" stroke="#fff" stroke-width="1.500" fill="none"/><path d="M7 20.200v3.600M14.500 20.200v3.600M4.500 24.300H18.500" stroke="#fff" stroke-width="1.500" fill="none"/><rect x="17.300" y="1.200" width="7.300" height="9.600" rx="1.800" fill="none" stroke="#fff" stroke-width="1.500"/><path d="M17.500 4.200h7" stroke="#fff" stroke-width="1.200"/><path d="M20.800 10.800V25" stroke="#fff" stroke-width="1.500"/></svg>
<!-- speaker -->
<svg width="26" height="22" viewBox="0 0 26 22" style="left:1662px;top:1020px"><path d="M1.500 7.300h4.300L11 1.800v18.400L5.800 14.700H1.500z" stroke="#fff" stroke-width="1.500" fill="none" stroke-linejoin="round"/><path d="M14 6.800a6 6 0 0 1 0 8.400M17 3.800a10 10 0 0 1 0 14.400M20.200 1a14 14 0 0 1 0 20" stroke="#fff" stroke-width="1.500" fill="none" stroke-linecap="round"/></svg>
<!-- bell with z -->
<svg width="24" height="26" viewBox="0 0 24 26" style="left:1807px;top:1018.500px"><path d="M10.500 2.500c-4.200 0-7 3.200-7 7.300v5L1 18.500v1.700h19v-1.700l-2.500-3.700v-5c0-4.100-2.800-7.300-7-7.300z" fill="#fff"/><path d="M7.200 21.800h6.600a3.300 3.300 0 0 1-6.600 0z" fill="#fff"/><path d="M8 8.200h6l-5.700 6.200h6" stroke="#1c1e40" stroke-width="1.900" fill="none"/><path d="M15.800 1.600h6l-5.700 6.600h6" stroke="#1c1e40" stroke-width="4" fill="none"/><path d="M15.800 1.600h6l-5.700 6.600h6" stroke="#fff" stroke-width="1.700" fill="none"/></svg>
<!-- copilot -->
<svg width="38" height="36" viewBox="0 0 38 36" style="left:1854px;top:1014px"><defs><linearGradient id="gC1" x1="0" y1="0" x2="0" y2="1"><stop offset="0" stop-color="#18a0ec"/><stop offset=".4" stop-color="#2ab8c8"/><stop offset=".65" stop-color="#6cc46a"/><stop offset="1" stop-color="#f4b428"/></linearGradient><linearGradient id="gC2" x1="1" y1="0" x2="0" y2="1"><stop offset="0" stop-color="#a868f4"/><stop offset=".5" stop-color="#d860b8"/><stop offset="1" stop-color="#f86838"/></linearGradient></defs>
<path d="M8.500 1.200H20c2.500 0 4.300 1.200 5.200 3.500l1.500 4.800H18l-4.500 13c-.7 1.800-2 2.700-3.800 2.700H5.500C2.500 25.200.7 23 1.500 20L5 5C5.500 2.700 6.800 1.200 8.500 1.200z" fill="url(#gC1)"/>
<path d="M17.500 1.200H20c2.500 0 4.300 1.200 5.200 3.500l1.500 4.800c.5.800 1.300.8 2.300.8H22z" fill="#1560d0"/>
<path d="M21.500 9.500h8.500c3 0 4.800 2 4 5l-2.500 9c-.6 1.800-1.800 2.700-3.600 2.700H14l4.500-13c.6-2 1.500-3.700 3-3.700z" fill="url(#gC2)"/>
<path d="M18 9.500h4.500L17 25.200h-4.500z" fill="#1c2048"/>
<rect x="9" y="24.500" width="27.300" height="10.600" rx="2.500" fill="#fcc419"/>
<text x="22.700" y="33.200" font-family="Liberation Sans, sans-serif" font-weight="700" font-size="9.500" letter-spacing=".8" fill="#111" text-anchor="middle">PRE</text>
</svg>

</div></div>
<span class="t" id="tabt" style="left:95.2px;top:163.8px;font-size:18px;color:#1b1b1b;letter-spacing:-0.774px;">This PC</span>
<span class="t" id="addr" style="left:443.3px;top:222.2px;font-size:21px;color:#1b1b1b;letter-spacing:-1.098px;">This PC</span>
<span class="t" id="srch" style="left:665.3px;top:222.2px;font-size:21px;color:#5f6063;letter-spacing:-0.891px;">Search This PC</span>
<span class="t" id="new" style="left:98.8px;top:301.3px;font-size:18px;color:#9b9b9b;letter-spacing:-0.439px;">New</span>
<span class="t" id="sort" style="left:680.3px;top:301.3px;font-size:18px;color:#1b1b1b;letter-spacing:-0.329px;">Sort</span>
<span class="t" id="details" style="left:963.5px;top:301.3px;font-size:18px;color:#1b1b1b;letter-spacing:-0.290px;">Details</span>
<span class="t" id="n_home" style="left:98.6px;top:366.8px;font-size:18px;color:#1b1b1b;letter-spacing:0.096px;">Home</span>
<span class="t" id="n_gal" style="left:98.6px;top:402.8px;font-size:18px;color:#1b1b1b;letter-spacing:-0.659px;">Gallery</span>
<span class="t" id="n_neo" style="left:98.6px;top:438.8px;font-size:18px;color:#1b1b1b;letter-spacing:-0.292px;">Neowin - Persona</span>
<span class="t" id="n_desk" style="left:98.6px;top:510.8px;font-size:18px;color:#1b1b1b;letter-spacing:0.050px;">Desktop</span>
<span class="t" id="n_down" style="left:98.6px;top:546.8px;font-size:18px;color:#1b1b1b;letter-spacing:0.038px;">Downloads</span>
<span class="t" id="n_docs" style="left:98.6px;top:582.8px;font-size:18px;color:#1b1b1b;letter-spacing:-0.072px;">Documents</span>
<span class="t" id="n_pics" style="left:98.6px;top:618.8px;font-size:18px;color:#1b1b1b;letter-spacing:-0.579px;">Pictures</span>
<span class="t" id="n_mus" style="left:98.6px;top:654.8px;font-size:18px;color:#1b1b1b;letter-spacing:-0.123px;">Music</span>
<span class="t" id="n_vid" style="left:98.6px;top:690.8px;font-size:18px;color:#1b1b1b;letter-spacing:-0.220px;">Videos</span>
<span class="t" id="n_pc" style="left:98.6px;top:762.8px;font-size:18px;color:#1b1b1b;letter-spacing:-1.088px;">This PC</span>
<span class="t" id="n_net" style="left:98.6px;top:798.8px;font-size:18px;color:#1b1b1b;letter-spacing:0.126px;">Network</span>
<span class="t" id="devs" style="left:303.0px;top:368.8px;font-size:18px;color:#1e3287;letter-spacing:-0.365px;">Devices and drives</span>
<span class="t" id="ldisk" style="left:377.5px;top:405.8px;font-size:18px;color:#1b1b1b;letter-spacing:-0.649px;">Local Disk (C:)</span>
<span class="t" id="free" style="left:377.3px;top:458.8px;font-size:18px;color:#6d6d6d;letter-spacing:-0.410px;">47.2 GB free of 74.1 GB</span>
<span class="t" id="dvd" style="left:758.8px;top:417.8px;font-size:18px;color:#1b1b1b;letter-spacing:-0.414px;">DVD Drive (D:)</span>
<span class="t" id="items" style="left:52.8px;top:854.8px;font-size:18px;color:#1e3a6e;letter-spacing:-0.119px;">2 items</span>
<span class="t" id="s_title" style="left:1219.6px;top:103.8px;font-size:18px;color:#1b1b1b;letter-spacing:0.019px;">Settings</span>
<span class="t" id="s_home" style="left:1108.5px;top:152.5px;font-size:41px;color:#1b1b1b;-webkit-text-stroke:1.48px #1b1b1b;letter-spacing:0.656px;">Home</span>
<span class="t" id="s_dvm" style="left:1315.3px;top:256.6px;font-size:28px;color:#1b1b1b;-webkit-text-stroke:1.01px #1b1b1b;letter-spacing:-1.209px;">DVM-RP</span>
<span class="t" id="s_vm" style="left:1315.3px;top:292.2px;font-size:21px;color:#1b1b1b;letter-spacing:-0.919px;">VMware20,1</span>
<span class="t" id="s_ren" style="left:1317.0px;top:322.2px;font-size:21px;color:#003e92;letter-spacing:-1.232px;">Rename</span>
<span class="t" id="s_eth" style="left:1177.6px;top:377.2px;font-size:21px;color:#1b1b1b;-webkit-text-stroke:0.76px #1b1b1b;letter-spacing:0.036px;">Ethernet0</span>
<span class="t" id="s_conn" style="left:1177.3px;top:408.8px;font-size:18px;color:#5f5f5f;letter-spacing:-0.042px;">Connected</span>
<span class="t" id="s_wu" style="left:1399.0px;top:377.2px;font-size:21px;color:#1b1b1b;-webkit-text-stroke:0.76px #1b1b1b;letter-spacing:0.339px;">Windows Update</span>
<span class="t" id="s_last" style="left:1399.0px;top:408.8px;font-size:18px;color:#5f5f5f;letter-spacing:-0.041px;">Last checked: 25 minutes ago</span>
<span class="t" id="s_rec" style="left:1147.7px;top:514.6px;font-size:30px;color:#1b1b1b;-webkit-text-stroke:1.08px #1b1b1b;letter-spacing:0.156px;">Recommended settings</span>
<span class="t" id="s_sub" style="left:1147.7px;top:571.7px;font-size:21px;color:#5f5f5f;letter-spacing:-0.143px;">Recent and commonly used settings</span>
<span class="t" id="s_disp" style="left:1212.5px;top:675.0px;font-size:21px;color:#1b1b1b;letter-spacing:-0.337px;">Display</span>
<span class="t" id="s_pow" style="left:1212.5px;top:779.9px;font-size:21px;color:#1b1b1b;letter-spacing:-0.606px;">Power</span>
<span class="t" id="s_apps" style="left:1212.5px;top:884.9px;font-size:21px;color:#1b1b1b;letter-spacing:-0.150px;">Installed apps</span>
<span class="t" id="tb_s" style="left:720.5px;top:1021.6px;font-size:20px;color:#5a5a5e;letter-spacing:-0.479px;">Search</span>
<span class="t" id="tb_time" style="left:1719.2px;top:1009.6px;font-size:18px;color:#ffffff;letter-spacing:0.073px;">11:00 AM</span>
<span class="t" id="tb_date" style="left:1712.3px;top:1033.3px;font-size:18px;color:#ffffff;letter-spacing:0.236px;">2/24/2024</span>
</body></html>
